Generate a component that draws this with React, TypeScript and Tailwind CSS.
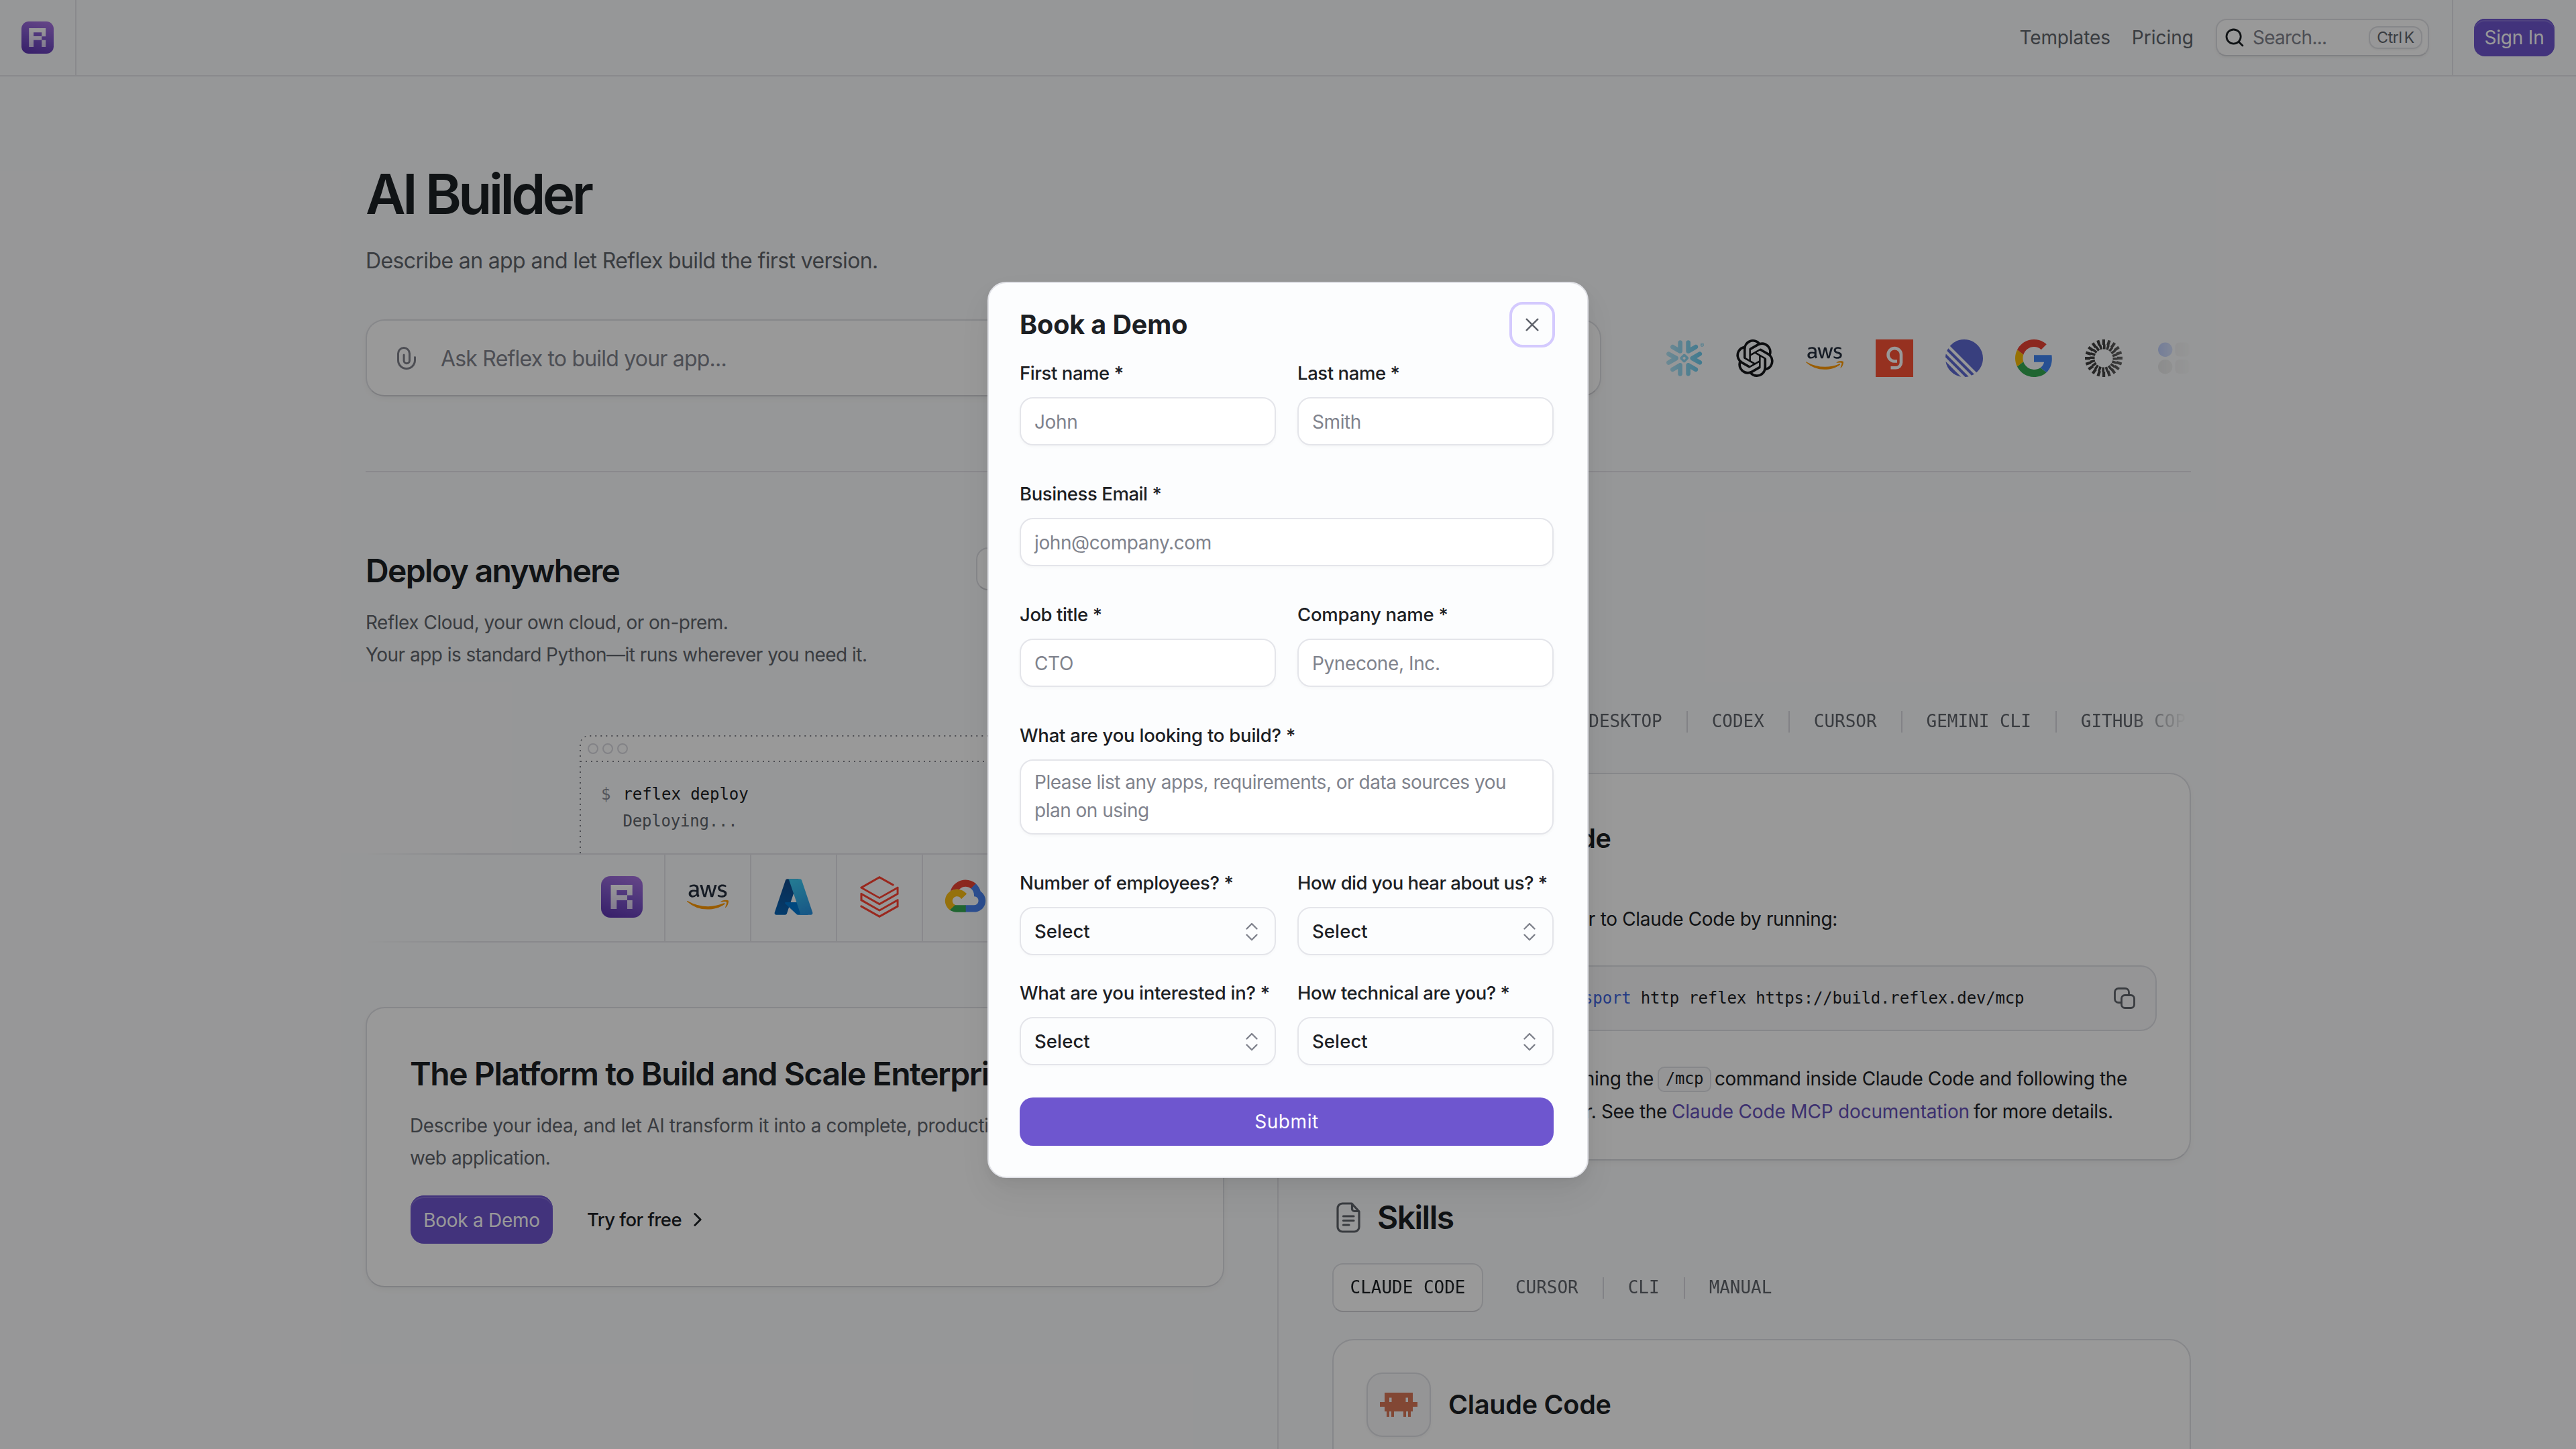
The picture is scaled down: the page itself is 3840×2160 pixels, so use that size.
import type { ReactNode } from "react";
import { clsx } from "clsx";
import { FaAws } from "react-icons/fa";
import { SiDatabricks, SiLinear, SiOpenai, SiSnowflake } from "react-icons/si";

const MONO = "font-['DejaVu_Sans_Mono','Liberation_Mono',monospace]";

function ReflexLogo({ className, id }: { className?: string; id: string }) {
  return (
    <svg viewBox="0 0 62 62" className={className}>
      <defs>
        <linearGradient id={`${id}-bg`} x1="0.7" y1="0" x2="0.4" y2="1">
          <stop offset="0" stopColor="#a571e0" />
          <stop offset="0.5" stopColor="#8058cc" />
          <stop offset="1" stopColor="#6239b4" />
        </linearGradient>
        <linearGradient id={`${id}-fg`} x1="0" y1="0" x2="0" y2="1">
          <stop offset="0" stopColor="#ffffff" />
          <stop offset="1" stopColor="#d9cdf0" />
        </linearGradient>
      </defs>
      <rect width="62" height="62" rx="14" fill={`url(#${id}-bg)`} />
      <path
        d="M14.5 13H46.7V28.6H39V36H46.7V49H39V36H23.3V49H14.5ZM23.3 21V28.3H39V21Z"
        fillRule="evenodd"
        fill={`url(#${id}-fg)`}
      />
    </svg>
  );
}

function AwsLogo({ className }: { className?: string }) {
  return (
    <div className={clsx("relative", className)}>
      <FaAws className="absolute inset-0 h-full w-full text-[#252f3e] [clip-path:inset(0_0_45%_0)]" />
      <FaAws className="absolute inset-0 h-full w-full text-[#f90] [clip-path:inset(55%_0_0_0)]" />
    </div>
  );
}

function GoogleLogo() {
  return (
    <svg viewBox="0 0 48 48" className="size-14">
      <path fill="#EA4335" d="M24 9.5c3.54 0 6.71 1.22 9.21 3.6l6.85-6.85C35.9 2.38 30.47 0 24 0 14.62 0 6.51 5.38 2.56 13.22l7.98 6.19C12.43 13.72 17.74 9.5 24 9.5z" />
      <path fill="#4285F4" d="M46.98 24.55c0-1.57-.15-3.09-.38-4.55H24v9.02h12.94c-.58 2.96-2.26 5.48-4.78 7.18l7.73 6c4.51-4.18 7.09-10.36 7.09-17.65z" />
      <path fill="#FBBC05" d="M10.53 28.59c-.48-1.45-.76-2.99-.76-4.59s.27-3.14.76-4.59l-7.98-6.19C.92 16.46 0 20.12 0 24c0 3.88.92 7.54 2.56 10.78l7.97-6.19z" />
      <path fill="#34A853" d="M24 48c6.48 0 11.93-2.13 15.89-5.81l-7.73-6c-2.15 1.45-4.92 2.3-8.16 2.3-6.26 0-11.57-4.22-13.47-9.91l-7.98 6.19C6.51 42.62 14.62 48 24 48z" />
    </svg>
  );
}

function GongLogo() {
  return (
    <svg viewBox="0 0 56 56" className="size-14">
      <rect width="56" height="56" fill="#fa5236" />
      <path d="M32 32.5H27.5A9.7 9.7 0 1 1 38 22.6V34.5A8 8 0 0 1 30 42.3H22.5" fill="none" stroke="#fff" strokeWidth="4.6" />
    </svg>
  );
}

function RaysLogo() {
  const rays = Array.from({ length: 20 }, (_, i) => i * 18);
  return (
    <svg viewBox="-28 -28 56 56" className="size-14">
      {rays.map((angle) => (
        <path key={angle} transform={`rotate(${angle})`} d="M-2.2-28H2V-20.5H2.6V-13.5H-1V-20H-2.2Z" fill="#404040" />
      ))}
    </svg>
  );
}

function DotsLogo() {
  return (
    <svg viewBox="0 0 56 56" className="size-14">
      <circle cx="15.7" cy="15.2" r="10.7" fill="#6f94ff" />
      <rect x="30.5" y="4.5" width="21" height="21" rx="6" fill="#d9d9d9" />
      <circle cx="15.7" cy="40.8" r="10.7" fill="#cfcfcf" />
      <rect x="30.5" y="30" width="21" height="21" rx="6" fill="#d9d9d9" />
    </svg>
  );
}

function AzureLogo() {
  return (
    <svg viewBox="0 0 96 96" className="size-[62px]">
      <defs>
        <linearGradient id="az-a" x1="58.97" x2="37.19" y1="7.41" y2="103.76" gradientUnits="userSpaceOnUse" gradientTransform="translate(-22)">
          <stop offset="0" stopColor="#114a8b" />
          <stop offset="1" stopColor="#0669bc" />
        </linearGradient>
        <linearGradient id="az-b" x1="46" x2="78" y1="10" y2="88" gradientUnits="userSpaceOnUse">
          <stop offset="0" stopColor="#3ccbf4" />
          <stop offset="1" stopColor="#2892df" />
        </linearGradient>
      </defs>
      <path fill="url(#az-a)" d="M33.338 6.544h26.038l-27.03 80.087a4.152 4.152 0 0 1-3.933 2.824H8.149a4.145 4.145 0 0 1-3.928-5.47L29.404 9.368a4.152 4.152 0 0 1 3.934-2.825z" />
      <path fill="#0078d4" d="M71.175 60.261h-41.29a1.911 1.911 0 0 0-1.305 3.309l26.532 24.764a4.171 4.171 0 0 0 2.846 1.121h23.38z" />
      <path fill="url(#az-b)" d="M66.595 9.364a4.145 4.145 0 0 0-3.928-2.82H33.648a4.146 4.146 0 0 1 3.928 2.82l25.184 74.62a4.146 4.146 0 0 1-3.928 5.472h29.02a4.146 4.146 0 0 0 3.927-5.472z" />
    </svg>
  );
}

function GoogleCloudLogo() {
  return (
    <svg viewBox="0 0 128 128" className="size-[66px]">
      <path fill="#ea4535" d="M80.6 40.3h.4l-.2-.2 14-14v-.3c-11.8-10.4-28.1-14-43.2-9.5C36.5 20.8 24.9 32.8 20.7 48c.2-.1.5-.2.8-.2 5.2-3.4 11.4-5.4 17.9-5.4 2.2 0 4.3.2 6.4.6.1-.1.2-.1.3-.1 9-9.9 24.2-11.1 34.6-2.6h-.1z" />
      <path fill="#4a83f0" d="M108.1 47.8c-2.3-8.5-7.1-16.2-13.8-22.1L80 39.9c6 4.9 9.5 12.3 9.3 20v2.5c16.9 0 16.9 25.2 0 25.2H63.9v20h-.1l.1.2h25.4c14.6.1 27.5-9.3 31.8-23.1 4.3-13.8-1-28.8-13-36.9z" />
      <path fill="#36a852" d="M39 107.9h26.3V87.7H39c-1.9 0-3.7-.4-5.4-1.1l-15.2 14.6v.2c6 4.3 13.2 6.6 20.7 6.6z" />
      <path fill="#f9bc15" d="M40.2 41.9c-14.9.1-28.1 9.3-32.9 22.8-4.8 13.6 0 28.5 11.8 37.3l15.6-14.9c-8.6-3.7-10.6-14.5-4-20.8 6.6-6.4 17.8-4.4 21.7 3.8L68 55.2C61.4 46.9 51.1 42 40.2 42.1z" />
    </svg>
  );
}

function ClaudeCodeIcon() {
  return (
    <svg viewBox="0 0 56 36" className="h-9 w-14" fill="#d97757">
      <path
        fillRule="evenodd"
        d="M7 0H49V14H56V21H49V28H46V36H42V28H39V36H35V28H21V36H17V28H14V36H10V28H7V21H0V14H7ZM14 7.5V14H17.5V7.5ZM38.5 7.5V14H42V7.5Z"
      />
    </svg>
  );
}

function Header() {
  return (
    <header className="flex h-[114px] items-stretch justify-between border-b-2 border-[#e4e5ea]">
      <div className="flex w-[114px] items-center border-r-2 border-[#e4e5ea] pl-8">
        <ReflexLogo id="nav" className="size-12" />
      </div>
      <div className="flex items-center pr-8 text-[#60646c]">
        <a className="tracking-[-0.1px]">Templates</a>
        <a className="ml-8 tracking-[0px]">Pricing</a>
        <div className="ml-[33px] flex h-14 w-[318px] items-center rounded-[16px] border-2 border-[#e0e1e6] border-b-[#d4d5da] bg-white pr-2 pl-3 shadow-[0_2px_4px_rgba(0,0,0,0.05)]">
          <svg viewBox="0 0 28 28" className="size-7" fill="none" stroke="#1c2024" strokeWidth="2.8" strokeLinecap="round">
            <circle cx="12.6" cy="12.6" r="10.6" />
            <path d="M20.4 20.4L26 26" />
          </svg>
          <span className="ml-[13px] grow tracking-[-0.75px] text-[#80838d]">Search...</span>
          <span className="flex h-[34px] w-20 items-center justify-center rounded-[14px] border-2 border-[#e0e1e6] bg-[#fcfcfd] text-[23px] tracking-[-0.4px] whitespace-nowrap shadow-[0_2px_2px_rgba(0,0,0,0.04)]">
            Ctrl<span className="ml-[3px]">K</span>
          </span>
        </div>
        <div className="ml-[34px] w-0.5 self-stretch bg-[#e4e5ea]" />
        <button className="ml-[31px] flex h-14 w-[120px] items-center justify-center rounded-[16px] bg-[#6e56cf] tracking-[-0.2px] whitespace-nowrap text-white shadow-[inset_0_2px_0_#6e56cf,inset_0_4px_0_rgba(255,255,255,0.16)]">
          Sign In
        </button>
      </div>
    </header>
  );
}

function Hero() {
  return (
    <section className="pt-[127px]">
      <h1 className="text-[82px] leading-[97px] font-semibold tracking-[-4.7px] text-[#1c2024]">AI Builder</h1>
      <p className="mt-[27px] text-[32px] leading-[48px] tracking-[-0.63px] text-[#60646c]">
        Describe an app and let Reflex build the first version.
      </p>
      <div className="mt-[63px] flex">
        <div className="flex h-[115px] w-[1842px] items-center rounded-[28px] border-2 border-[#e0e1e6] border-b-[#d0d1d6] bg-white pl-[45px] shadow-[0_4px_8px_rgba(0,0,0,0.04)]">
          <svg viewBox="0 0 28 34" className="h-[34px] w-7" fill="none" stroke="#80838d" strokeWidth="3" strokeLinecap="round">
            <path d="M26.5 15.5V20A12.5 12.5 0 0 1 1.5 20V10A8.5 8.5 0 0 1 18.5 10V20.5A4.2 4.2 0 0 1 10.1 20.5V12" />
          </svg>
          <span className="ml-[37px] pt-0.5 text-[32px] tracking-[-0.8px] text-[#80838d]">Ask Reflex to build your app...</span>
        </div>
        <div className="ml-12 flex w-[831px] items-center gap-12 overflow-hidden pl-[49px] [mask-image:linear-gradient(to_right,transparent,black_18%,black_84%,transparent_101%)]">
          <SiSnowflake className="size-14 shrink-0 text-[#29b5e8]" />
          <SiOpenai className="size-14 shrink-0 text-[#15171a]" />
          <AwsLogo className="size-14 shrink-0" />
          <div className="shrink-0"><GongLogo /></div>
          <SiLinear className="size-14 shrink-0 text-[#5e6ad2]" />
          <div className="shrink-0"><GoogleLogo /></div>
          <div className="shrink-0"><RaysLogo /></div>
          <div className="shrink-0"><DotsLogo /></div>
        </div>
      </div>
    </section>
  );
}

function Terminal() {
  return (
    <div className="relative ml-[319px] h-[176px] w-[642px] overflow-hidden rounded-t-[14px]">
      <div className="flex h-10 items-center gap-1.5 bg-white pl-3">
        <span className="size-4 rounded-full border-2 border-[#d9d9e0]" />
        <span className="size-4 rounded-full border-2 border-[#d9d9e0]" />
        <span className="size-4 rounded-full border-2 border-[#d9d9e0]" />
      </div>
      <div className={clsx(MONO, "flex gap-[18px] pt-7 pl-8 text-[24px] leading-10 tracking-[-0.05px]")}>
        <span className="text-[#8b8d98]">$</span>
        <div>
          <div className="text-[#1c2024]">reflex deploy</div>
          <div className="tracking-[-0.2px] text-[#60646c]">Deploying...</div>
        </div>
      </div>
      {/* dotted window frame */}
      <svg className="absolute inset-0" width="642" height="176" fill="none" stroke="#7d7f88" strokeWidth="2" strokeDasharray="2 6">
        <path d="M1 176V13A12 12 0 0 1 13 1H629A12 12 0 0 1 641 13V176" />
        <path d="M1 39H641" />
      </svg>
    </div>
  );
}

function ProviderCell({ children }: { children: ReactNode }) {
  return <div className="flex w-32 shrink-0 items-center justify-center border-r-2 border-[#e4e5ea] pb-[3px]">{children}</div>;
}

function DeployColumn() {
  return (
    <div className="w-[1280px] pt-28">
      <div className="flex h-16 items-center justify-between">
        <h2 className="pt-1.5 text-[48px] leading-none font-semibold tracking-[-1.65px] text-[#1c2024]">Deploy anywhere</h2>
        <button className="h-16 w-[370px] rounded-[18px] border-2 border-[#e0e1e6] border-b-[#d0d1d6] bg-white font-medium text-[#1c2024]">Learn more</button>
      </div>
      <p className="mt-6 leading-[48px] whitespace-nowrap text-[#60646c]">
        <span className="block tracking-[-0.5px]">Reflex Cloud, your own cloud, or on-prem.</span>
        <span className="block tracking-[-0.53px]">Your app is standard Python—it runs wherever you need it.</span>
      </p>
      <div className="h-24" />
      <Terminal />
      <div className="flex h-[133px] border-y-2 border-[#e4e5ea] pl-[319px] [mask-image:linear-gradient(to_right,transparent,black_12%,black_88%,transparent)]">
        <ProviderCell><ReflexLogo id="row" className="size-[62px]" /></ProviderCell>
        <ProviderCell><AwsLogo className="size-[62px]" /></ProviderCell>
        <ProviderCell><AzureLogo /></ProviderCell>
        <ProviderCell><SiDatabricks className="size-[62px] text-[#ff4433]" /></ProviderCell>
        <ProviderCell><GoogleCloudLogo /></ProviderCell>
      </div>
      <div className="mt-24 h-[418px] rounded-[28px] border-2 border-[#e0e1e6] border-b-[#d4d5da] bg-white pt-[68px] pl-16 shadow-[0_4px_8px_rgba(0,0,0,0.04)]">
        <h3 className="text-[48px] leading-[60px] font-semibold tracking-[-1.42px] whitespace-nowrap text-[#1c2024]">
          The Platform to Build and Scale Enterprise
        </h3>
        <p className="mt-[23px] leading-[48px] tracking-[-0.35px] whitespace-nowrap text-[#60646c]">
          Describe your idea, and let AI transform it into a complete, production-ready
          <br />
          <span className="tracking-[-0.45px]">web application.</span>
        </p>
        <div className="mt-8 flex items-center">
          <button className="ml-px h-[72px] w-[212px] rounded-[20px] bg-[#6e56cf] pt-px tracking-[-0.3px] text-white shadow-[inset_0_2px_0_#6e56cf,inset_0_4px_0_rgba(255,255,255,0.16)]">
            Book a Demo
          </button>
          <span className="ml-[51px] pt-px text-[27.5px] font-medium tracking-[-0.56px] text-[#1c2024]">Try for free</span>
          <svg viewBox="0 0 12 20" className="ml-[18px] h-5 w-3" fill="none" stroke="#1c2024" strokeWidth="2.8" strokeLinecap="round" strokeLinejoin="round">
            <path d="M1.8 1.5L10.2 10L1.8 18.5" />
          </svg>
        </div>
      </div>
    </div>
  );
}

function FileIcon() {
  return (
    <svg viewBox="0 0 36 46" className="h-[46px] w-9" fill="none" stroke="#60646c" strokeWidth="3.2" strokeLinecap="round" strokeLinejoin="round">
      <path d="M2 9A7 7 0 0 1 9 2H23L34 14V37A7 7 0 0 1 27 44H9A7 7 0 0 1 2 37Z" />
      <path d="M23.5 3V10A3.5 3.5 0 0 0 27 13.5H33M10.5 21H26M10.5 27.5H26M10.5 34H19" />
    </svg>
  );
}

function Tabs({ active, rest }: { active: string; rest: string[] }) {
  return (
    <div className={clsx(MONO, "flex h-[73px] items-center overflow-hidden text-[26px] tracking-[-0.03px] whitespace-nowrap text-[#60646c] [mask-image:linear-gradient(to_right,black_93%,transparent_99.5%)]")}>
      <span className="mr-12 flex h-full w-[225px] shrink-0 items-center justify-center rounded-[16px] border-2 border-[#e0e1e6] border-b-[#d0d1d6] bg-white text-[#1c2024]">
        {active}
      </span>
      {rest.map((tab, i) => (
        <span key={tab} className="flex items-center">
          {i > 0 && <span className="mx-9 h-8 w-0.5 bg-[#d9d9e0]" />}
          {tab}
        </span>
      ))}
    </div>
  );
}

function ToolHeading() {
  return (
    <div className="flex items-center">
      <div className="flex size-24 items-center justify-center rounded-[24px] border-2 border-[#e0e1e6] bg-[#f9f9fb] shadow-[0_2px_4px_rgba(0,0,0,0.04)]">
        <ClaudeCodeIcon />
      </div>
      <h3 className="ml-[26px] pt-0.5 text-[39.5px] font-semibold tracking-[-0.25px] text-[#1c2024]">Claude Code</h3>
    </div>
  );
}

function DocsColumn() {
  return (
    <div className="ml-[79px] w-[1362px] border-l-2 border-[#e4e5ea] pt-[243px] pl-20">
      <div className="flex h-12 items-center">
        <div className="pl-[7px]"><FileIcon /></div>
        <h2 className="ml-6 text-[48px] leading-none font-semibold tracking-[-1.4px] text-[#1c2024]">MCP</h2>
      </div>
      <div className="mt-11">
        <Tabs active="CLAUDE CODE" rest={["CLAUDE DESKTOP", "CODEX", "CURSOR", "GEMINI CLI", "GITHUB COPILOT"]} />
      </div>
      <div className="mt-[40px] h-[578px] rounded-[32px] border-2 border-[#e0e1e6] border-b-[#d8d9de] bg-white px-[49px] pt-[48px] text-[#1c2024] shadow-[0_4px_8px_rgba(0,0,0,0.04)]">
        <ToolHeading />
        <p className="mt-[48px] flex w-[702px] justify-end leading-[48px] tracking-[-0.33px] whitespace-nowrap">
          Add the Reflex MCP server to Claude Code by running:
        </p>
        <div className="mt-[45px] flex h-[98px] items-center justify-between rounded-[24px] border-2 border-[#e0e1e6] bg-[#f9f9fb] pr-[30px] pl-[21px]">
          <code className={clsx(MONO, "text-[24px] font-normal tracking-[-0.16px] whitespace-nowrap text-[#1c2024]")}>
            claude mcp add <span className="text-[#3e63dd]">--transport</span> http reflex https://build.reflex.dev/mcp
          </code>
          <svg viewBox="0 0 32 32" className="size-8" fill="none" stroke="#60646c" strokeWidth="2.8" strokeLinecap="round" strokeLinejoin="round">
            <rect x="11.5" y="11.5" width="19" height="19" rx="5" />
            <path d="M11 22.5H7A5.5 5.5 0 0 1 1.5 17V7A5.5 5.5 0 0 1 7 1.5H17A5.5 5.5 0 0 1 22.5 7V11" />
          </svg>
        </div>
        <div className="mt-[47px] leading-[49px] whitespace-nowrap">
          <div className="flex items-center">
            <span className="flex w-[428px] justify-end">Then authenticate by running the</span>
            <code className={clsx(MONO, "ml-[6px] flex h-[38px] w-20 items-center justify-center rounded-[10px] border-2 border-[#e0e1e6] bg-[#f9f9fb] text-[24px] font-normal")}>
              /mcp
            </code>
            <span className="ml-[5px] tracking-[-0.38px]">command inside Claude Code and following the</span>
          </div>
          <div className="flex">
            <span className="flex w-[448px] justify-end">steps in your browser. See the</span>
            <a className="ml-[7px] tracking-[-0.18px] text-[#6550b9]">Claude Code MCP documentation</a>
            <span className="ml-[6px] tracking-[-0.45px]">for more details.</span>
          </div>
        </div>
      </div>
      <div className="mt-[61px] flex h-12 items-center">
        <div className="pl-[6px]"><FileIcon /></div>
        <h2 className="ml-[25px] text-[48px] leading-none font-semibold tracking-[-1.5px] text-[#1c2024]">Skills</h2>
      </div>
      <div className="mt-11">
        <Tabs active="CLAUDE CODE" rest={["CURSOR", "CLI", "MANUAL"]} />
      </div>
      <div className="mt-[40px] h-[400px] rounded-[32px] border-2 border-[#e0e1e6] bg-white px-[49px] pt-[48px]">
        <ToolHeading />
      </div>
    </div>
  );
}

function Label({ children, className }: { children: ReactNode; className?: string }) {
  return (
    <label className={clsx("block h-10 text-[27.5px] leading-10 font-medium whitespace-nowrap", className ?? "tracking-[-0.42px]")}>
      {children}
    </label>
  );
}

const boxClass = "mt-4 flex h-[72px] w-full items-center rounded-[20px] border-2 border-[#e4e5ea] pl-5 pt-px";

function TextField({ label, placeholder, labelClass }: { label: string; placeholder: string; labelClass?: string }) {
  return (
    <div className="flex-1">
      <Label className={labelClass}>{label}</Label>
      <div className={clsx(boxClass, "bg-white tracking-[-0.4px] text-[#80838d] shadow-[0_2px_4px_rgba(0,0,0,0.03)]")}>{placeholder}</div>
    </div>
  );
}

function SelectField({ label, labelClass }: { label: string; labelClass?: string }) {
  return (
    <div className="flex-1">
      <Label className={labelClass}>{label}</Label>
      <div className={clsx(boxClass, "justify-between pr-6 text-[27.5px] font-medium tracking-[0.1px] shadow-[0_2px_4px_rgba(0,0,0,0.02)]")}>
        Select
        <svg viewBox="0 0 20 28" className="h-7 w-5" fill="none" stroke="#80838d" strokeWidth="2.4" strokeLinecap="round" strokeLinejoin="round">
          <path d="M2.5 9.5L10 2L17.5 9.5M2.5 18.5L10 26L17.5 18.5" />
        </svg>
      </div>
    </div>
  );
}

function DemoModal() {
  return (
    <div className="h-[1336px] w-[896px] rounded-[28px] border-2 border-[#e0e1e6] bg-[#fcfdfe] pt-[30px] pr-[50px] pl-[46px] text-[#1c2024] shadow-[0_24px_48px_rgba(0,0,0,0.06),0_8px_16px_rgba(0,0,0,0.04)]">
      <div className="flex h-16 items-center justify-between">
        <h2 className="pt-0.5 text-[39.5px] font-bold tracking-[-0.1px]">Book a Demo</h2>
        <button className="-mr-0.5 flex size-[68px] items-center justify-center rounded-[20px] border-4 border-[#d4cafe]">
          <svg viewBox="0 0 20 20" className="size-5" fill="none" stroke="#60646c" strokeWidth="2.6" strokeLinecap="round">
            <path d="M1.8 1.8L18.2 18.2M18.2 1.8L1.8 18.2" />
          </svg>
        </button>
      </div>
      <div className="mt-5 flex gap-8">
        <TextField label="First name *" placeholder="John" />
        <TextField label="Last name *" placeholder="Smith" />
      </div>
      <div className="mt-[52px] flex">
        <TextField label="Business Email *" placeholder="john@company.com" />
      </div>
      <div className="mt-[52px] flex gap-8">
        <TextField label="Job title *" placeholder="CTO" />
        <TextField label="Company name *" placeholder="Pynecone, Inc." labelClass="tracking-[-0.22px]" />
      </div>
      <div className="mt-[52px]">
        <Label className="tracking-[-0.23px]">What are you looking to build? *</Label>
        <div className="mt-4 h-28 rounded-[20px] border-2 border-[#e4e5ea] bg-white pt-[11px] pl-5 leading-[42px] tracking-[-0.5px] text-[#80838d] shadow-[0_2px_4px_rgba(0,0,0,0.03)]">
          Please list any apps, requirements, or data sources you
          <br />
          plan on using
        </div>
      </div>
      <div className="mt-[52px] flex gap-8">
        <SelectField label="Number of employees? *" labelClass="tracking-[-0.36px]" />
        <SelectField label="How did you hear about us? *" labelClass="tracking-[-0.53px]" />
      </div>
      <div className="mt-9 flex gap-8">
        <SelectField label="What are you interested in? *" labelClass="tracking-[-0.26px]" />
        <SelectField label="How technical are you? *" labelClass="tracking-[-0.47px]" />
      </div>
      <button className="mt-12 h-[72px] w-full rounded-[20px] bg-[#6e56cf] tracking-[0.6px] text-white">Submit</button>
    </div>
  );
}

export default function App() {
  return (
    <div className="relative h-[2160px] w-[3840px] overflow-hidden bg-[#fbfcfd] font-['Inter','Liberation_Sans',sans-serif] text-[28px] tracking-[-0.35px]">
      <Header />
      <main className="ml-[545px] w-[2721px]">
        <Hero />
        <div className="mt-[111px] flex border-t-2 border-[#e4e5ea]">
          <DeployColumn />
          <DocsColumn />
        </div>
      </main>
      <div className="absolute inset-0 flex items-center justify-center bg-black/40 pt-4">
        <DemoModal />
      </div>
    </div>
  );
}
